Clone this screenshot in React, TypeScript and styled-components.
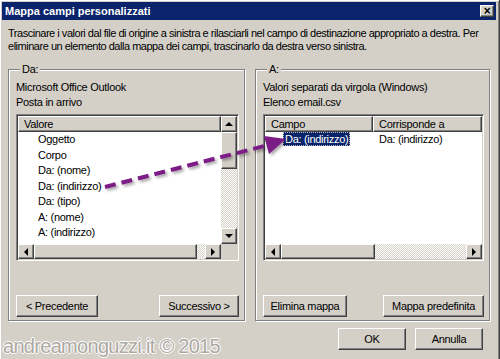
import React from "react";
import styled, { createGlobalStyle, css } from "styled-components";

const GlobalStyle = createGlobalStyle`
  html, body {
    margin: 0;
    padding: 0;
    background: #d4d0c8;
  }
  body {
    font-family: "Liberation Sans", Arial, sans-serif;
    font-size: 11px;
    letter-spacing: -0.3px;
    color: #000;
  }
`;

const raised = css`
  border: 1px solid;
  border-color: #fff #404040 #404040 #fff;
  box-shadow: inset -1px -1px 0 #808080, inset 1px 1px 0 #d4d0c8;
  background: #d4d0c8;
`;

const Window = styled.div`
  position: relative;
  width: 500px;
  height: 359px;
  box-sizing: border-box;
  padding: 2px 3px 0 2px;
  background: #d4d0c8;
  border-right: 1px solid #404040;
  box-shadow: inset 1px 1px 0 #fff, inset -1px 0 0 #808080;
  overflow: hidden;
  display: flex;
  flex-direction: column;
`;

const TitleBar = styled.div`
  height: 18px;
  flex-shrink: 0;
  background: #0b236b;
  display: flex;
  align-items: center;
  justify-content: space-between;
  padding: 0 2px 0 3px;
`;

const Title = styled.span`
  color: #fff;
  font-weight: bold;
  font-size: 11px;
  letter-spacing: 0;
`;

const CloseButton = styled.div`
  ${raised};
  width: 12px;
  height: 10px;
  display: flex;
  align-items: center;
  justify-content: center;
  font-size: 12px;
  font-weight: bold;
  line-height: 1;
`;

const Body = styled.div`
  flex: 1;
  display: flex;
  flex-direction: column;
  padding: 7px 7px 0 6px;
`;

const Description = styled.p`
  margin: 0 0 11px 0;
  line-height: 12.5px;
  letter-spacing: -0.48px;
`;

const Columns = styled.div`
  display: grid;
  grid-template-columns: 237px 235px;
  column-gap: 10px;
`;

const Group = styled.fieldset`
  margin: 0;
  padding: 5px 5px 3px 7px;
  height: 258px;
  flex-shrink: 0;
  box-sizing: border-box;
  border: 1px solid #808080;
  box-shadow: inset 1px 1px 0 #fff, 1px 1px 0 #fff;
  display: flex;
  flex-direction: column;
`;

const Legend = styled.legend`
  padding: 0 2px;
  margin-left: 4px;
  background: #d4d0c8;
`;

const Info = styled.div`
  line-height: 14.5px;
`;

const ListView = styled.div`
  margin-top: 5px;
  height: 147px;
  flex-shrink: 0;
  box-sizing: border-box;
  border: 1px solid;
  border-color: #808080 #fff #fff #808080;
  box-shadow: inset 1px 1px 0 #404040, inset -1px -1px 0 #d4d0c8;
  padding: 1px;
  background: #fff;
  display: flex;
  flex-direction: column;
`;

const ListTop = styled.div`
  flex: 1;
  display: flex;
  min-height: 0;
`;

const ListMain = styled.div`
  flex: 1;
  overflow: hidden;
  display: flex;
  flex-direction: column;
`;

const Header = styled.div`
  display: flex;
  height: 16px;
  flex-shrink: 0;
`;

const HeaderCell = styled.div<{ $w?: number }>`
  ${raised};
  box-sizing: border-box;
  height: 16px;
  padding-left: 5px;
  line-height: 14px;
  white-space: nowrap;
  overflow: hidden;
  ${(p) => (p.$w ? `width: ${p.$w}px; flex-shrink: 0;` : "flex: 1;")}
`;

const Row = styled.div`
  height: 15.5px;
  flex-shrink: 0;
  line-height: 15.5px;
  display: flex;
  white-space: nowrap;
`;

const Cell = styled.div<{ $w?: number; $indent: number }>`
  padding-left: ${(p) => p.$indent}px;
  box-sizing: border-box;
  ${(p) => (p.$w ? `width: ${p.$w}px; flex-shrink: 0;` : "flex: 1;")}
`;

const Selected = styled.span`
  background: #0a246a;
  color: #fff;
  padding: 1px 2px;
  outline: 1px dotted #b8b8c8;
  outline-offset: -1px;
`;

const VScroll = styled.div`
  width: 16px;
  flex-shrink: 0;
  display: flex;
  flex-direction: column;
  background: repeating-conic-gradient(#fff 0 25%, #d4d0c8 0 50%) 0 0 / 2px 2px;
`;

const HScroll = styled.div`
  height: 15px;
  flex-shrink: 0;
  display: flex;
  background: repeating-conic-gradient(#fff 0 25%, #d4d0c8 0 50%) 0 0 / 2px 2px;
`;

const ScrollButton = styled.div`
  ${raised};
  width: 16px;
  height: 15px;
  box-sizing: border-box;
  flex-shrink: 0;
  display: flex;
  align-items: center;
  justify-content: center;
`;

const VButton = styled(ScrollButton)`
  height: 16px;
`;

const Thumb = styled.div<{ $size: number; $vertical?: boolean }>`
  ${raised};
  box-sizing: border-box;
  flex-shrink: 0;
  ${(p) =>
    p.$vertical ? `height: ${p.$size}px;` : `width: ${p.$size}px; height: 15px;`}
`;

const Track = styled.div`
  flex: 1;
`;

const Corner = styled.div`
  width: 16px;
  flex-shrink: 0;
  background: #d4d0c8;
`;

const Triangle = styled.span<{ $dir: "up" | "down" | "left" | "right" }>`
  width: 0;
  height: 0;
  border: 4px solid transparent;
  ${(p) =>
    ({
      up: "border-bottom-color: #000; border-top-width: 0; margin-top: -1px;",
      down: "border-top-color: #000; border-bottom-width: 0;",
      left: "border-right-color: #000; border-left-width: 0;",
      right: "border-left-color: #000; border-right-width: 0;",
    })[p.$dir]}
`;

const ButtonRow = styled.div`
  margin-top: auto;
  display: flex;
  justify-content: space-between;
`;

const Button = styled.div<{ $w: number }>`
  ${raised};
  width: ${(p) => p.$w}px;
  height: 22px;
  box-sizing: border-box;
  display: flex;
  align-items: center;
  justify-content: center;
  white-space: nowrap;
`;

const Footer = styled.div`
  display: flex;
  justify-content: flex-end;
  gap: 9px;
  margin-top: 7px;
  padding-right: 6px;
`;

const Overlay = styled.svg`
  position: absolute;
  left: 0;
  top: 0;
  pointer-events: none;
`;

const Watermark = styled.div`
  position: absolute;
  left: 3px;
  bottom: 1px;
  font-size: 20px;
  letter-spacing: -0.7px;
  color: #aca8a2;
  text-shadow: 1px 0 0 #fff, -1px 0 0 #fff, 0 1px 0 #fff, 0 -1px 0 #fff;
`;

const sourceFields = [
  "Oggetto",
  "Corpo",
  "Da: (nome)",
  "Da: (indirizzo)",
  "Da: (tipo)",
  "A: (nome)",
  "A: (indirizzo)",
  "A: (tipo)",
];

export default function App() {
  return (
    <Window>
      <GlobalStyle />
      <TitleBar>
        <Title>Mappa campi personalizzati</Title>
        <CloseButton>×</CloseButton>
      </TitleBar>
      <Body>
        <Description>
          Trascinare i valori dal file di origine a sinistra e rilasciarli nel
          campo di destinazione appropriato a destra. Per eliminare un elemento
          dalla mappa dei campi, trascinarlo da destra verso sinistra.
        </Description>
        <Columns>
          <Group>
            <Legend>Da:</Legend>
            <Info>Microsoft Office Outlook</Info>
            <Info>Posta in arrivo</Info>
            <ListView>
              <ListTop>
                <ListMain>
                  <Header>
                    <HeaderCell>Valore</HeaderCell>
                  </Header>
                  {sourceFields.map((f) => (
                    <Row key={f}>
                      <Cell $indent={20}>{f}</Cell>
                    </Row>
                  ))}
                </ListMain>
                <VScroll>
                  <VButton>
                    <Triangle $dir="up" />
                  </VButton>
                  <Thumb $vertical $size={37} />
                  <Track />
                  <VButton>
                    <Triangle $dir="down" />
                  </VButton>
                </VScroll>
              </ListTop>
              <HScroll>
                <ScrollButton>
                  <Triangle $dir="left" />
                </ScrollButton>
                <Thumb $size={163} />
                <Track />
                <ScrollButton>
                  <Triangle $dir="right" />
                </ScrollButton>
                <Corner />
              </HScroll>
            </ListView>
            <ButtonRow>
              <Button $w={82}>&lt; Precedente</Button>
              <Button $w={80}>Successivo &gt;</Button>
            </ButtonRow>
          </Group>
          <Group>
            <Legend>A:</Legend>
            <Info>Valori separati da virgola (Windows)</Info>
            <Info>Elenco email.csv</Info>
            <ListView>
              <ListTop>
                <ListMain>
                  <Header>
                    <HeaderCell $w={108}>Campo</HeaderCell>
                    <HeaderCell>Corrisponde a</HeaderCell>
                  </Header>
                  <Row>
                    <Cell $w={108} $indent={18}>
                      <Selected>Da: (indirizzo)</Selected>
                    </Cell>
                    <Cell $indent={6}>Da: (indirizzo)</Cell>
                  </Row>
                </ListMain>
              </ListTop>
              <HScroll>
                <ScrollButton>
                  <Triangle $dir="left" />
                </ScrollButton>
                <Thumb $size={94} />
                <Track />
                <ScrollButton>
                  <Triangle $dir="right" />
                </ScrollButton>
              </HScroll>
            </ListView>
            <ButtonRow>
              <Button $w={84}>Elimina mappa</Button>
              <Button $w={101}>Mappa predefinita</Button>
            </ButtonRow>
          </Group>
        </Columns>
        <Footer>
          <Button $w={68}>OK</Button>
          <Button $w={68}>Annulla</Button>
        </Footer>
      </Body>
      <Overlay width={500} height={359} viewBox="0 0 500 359">
        <defs>
          <filter id="shadow" x="-10%" y="-30%" width="130%" height="170%">
            <feDropShadow dx="2" dy="2" stdDeviation="1.5" floodColor="#000" floodOpacity="0.35" />
          </filter>
        </defs>
        <g filter="url(#shadow)" fill="#7c1f86" stroke="#7c1f86">
          <line x1={105} y1={187} x2={268} y2={145} strokeWidth={4} strokeDasharray="11 6" />
          <polygon points="286,139 264,136 269,154" stroke="none" />
        </g>
      </Overlay>
      <Watermark>andreamonguzzi.it © 2015</Watermark>
    </Window>
  );
}
